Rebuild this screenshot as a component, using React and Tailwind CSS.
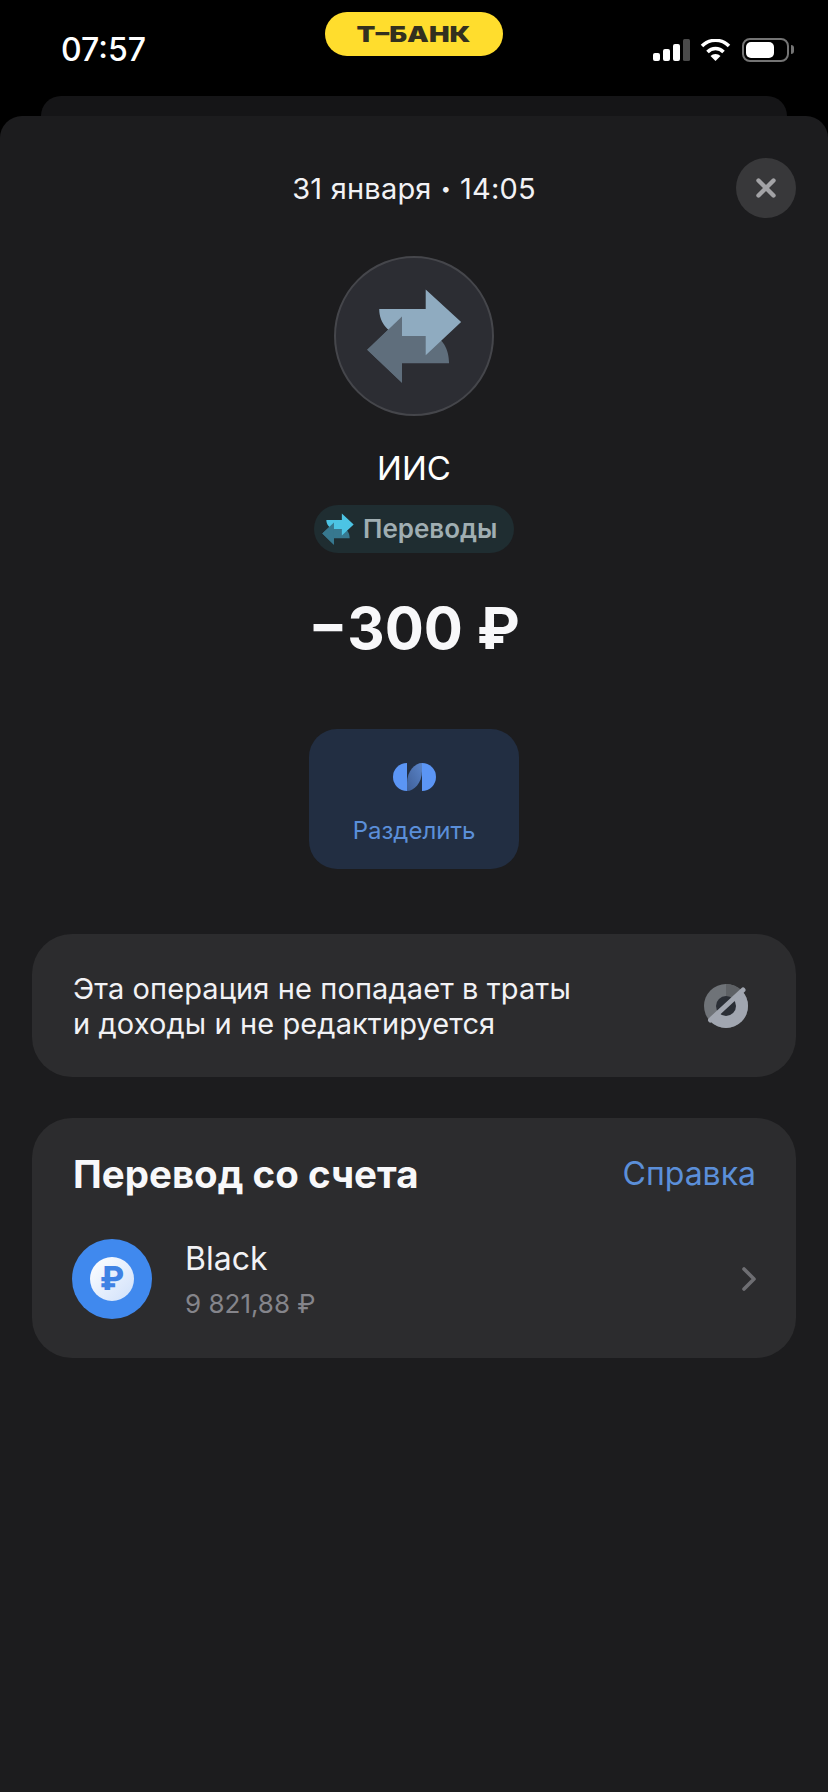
import { X } from "lucide-react";

const StatusIcons = () => (
  <div className="flex items-center justify-end h-[25px]">
    <svg width="37" height="22" viewBox="0 0 37 22" className="mr-[10px]">
      <rect x="0" y="14" width="7" height="8" rx="2" fill="#fff" />
      <rect x="10" y="10" width="7" height="12" rx="2" fill="#fff" />
      <rect x="20" y="5" width="7" height="17" rx="2" fill="#fff" />
      <rect x="30" y="0" width="7" height="22" rx="1.5" fill="#4a4a4a" />
    </svg>
    <svg width="31" height="22" viewBox="0 0 31 22" className="mr-[11px]">
      <path d="M15.5 22 L10.5 17 A7 7 0 0 1 20.5 17 Z" fill="#fff" />
      <path d="M7.5 13 A11 11 0 0 1 23.5 13" fill="none" stroke="#fff" strokeWidth="3.5" />
      <path d="M2 7 A19 19 0 0 1 29 7" fill="none" stroke="#fff" strokeWidth="3.5" />
    </svg>
    <div className="flex items-center">
      <div className="w-[47px] h-[24px] rounded-[8px] border-2 border-[#747474] p-[2px]">
        <div className="w-[28px] h-full rounded-[5px] bg-white"></div>
      </div>
      <div className="w-[3px] h-[9px] ml-[2px] rounded-r-full bg-[#747474]"></div>
    </div>
  </div>
);

const TransferIcon = ({ size, light, dark, box }) => (
  <svg width={size} height={size} viewBox={box}>
    <path d="M198 330 L305 228 V288 H395 C430 290 450 330 450 372 H305 V432 Z" fill={dark} />
    <path d="M235 205 H378 V145 L487 245 L378 347 V288 H305 C265 280 235 250 235 205 Z" fill={light} />
    <path d="M198 330 L305 228 V432 Z" fill={dark} />
  </svg>
);

const SplitIcon = () => (
  <svg width="47" height="28" viewBox="0 0 47 28">
    <defs>
      <linearGradient id="leaf" x1="0" y1="1" x2="1" y2="0">
        <stop offset="0" stopColor="#3f5f98" />
        <stop offset="1" stopColor="#5a84c8" />
      </linearGradient>
    </defs>
    <path d="M16 0 A14 14 0 0 0 16 28 Z" fill="#5b95f5" />
    <path d="M31 0 A14 14 0 0 1 31 28 Z" fill="#5b95f5" />
    <path d="M16 28 V20 C16 8 24 0 31 0 V8 C31 20 23 28 16 28 Z" fill="url(#leaf)" />
  </svg>
);

const NoEditIcon = () => (
  <svg width="46" height="46" viewBox="0 0 46 46">
    <defs>
      <clipPath id="disc">
        <circle cx="23" cy="23" r="22" />
      </clipPath>
    </defs>
    <circle cx="23" cy="23" r="22" fill="#6f7378" />
    <path d="M23 23 L23 1 A22 22 0 0 1 39 8 Z" fill="#5e6165" />
    <path d="M40.7 4.7 L5.7 36.3 V46 H46 V4.7 Z" fill="#a1a6b0" clipPath="url(#disc)" />
    <circle cx="23" cy="23" r="10" fill="#2a2e35" />
    <path d="M40 7 L7.5 37" stroke="#a1a6b0" strokeWidth="5" strokeLinecap="round" />
  </svg>
);

export default function App() {
  return (
    <div className="h-[1792px] w-[828px] bg-black flex flex-col overflow-hidden font-['Inter',sans-serif]">
      {/* Status bar */}
      <div className="h-[96px] grid grid-cols-[240px_1fr_240px] shrink-0">
        <div className="pl-[61px] pt-[30px] text-[32px] leading-[39px] font-medium text-white">07:57</div>
        <div className="flex justify-center pt-[12px]">
          <div className="w-[178px] h-[44px] rounded-[22px] bg-[#ffdd2d] flex items-center justify-center">
            <span className="text-[22px] font-black text-[#33301f] scale-x-[1.25]">Т–БАНК</span>
          </div>
        </div>
        <div className="pt-[37px] pr-[34px]">
          <StatusIcons />
        </div>
      </div>

      {/* Card behind the sheet */}
      <div className="mx-[41px] h-[20px] rounded-t-[20px] bg-[#151517] shrink-0"></div>

      {/* Sheet */}
      <div className="relative flex-1 rounded-t-[22px] bg-[#1c1c1e] flex flex-col items-center">
        <button className="absolute top-[42px] right-[32px] w-[60px] h-[60px] rounded-full bg-[#38383a] flex items-center justify-center">
          <X size={30} strokeWidth={3.5} className="text-[#a3a3a6]" />
        </button>

        <div className="mt-[55px] h-[36px] flex items-center text-[29px] leading-[36px] tracking-[0.2px] text-[#f2f2f5]">
          31 января<span className="mx-[9px] text-[18px]">•</span>14:05
        </div>

        <div className="mt-[49px] w-[160px] h-[160px] rounded-full bg-[#2c2d33] border-2 border-[#45464b] flex items-center justify-center">
          <TransferIcon size={156} light="#8fabc0" dark="#5f6e7c" box="102 48 480 480" />
        </div>

        <div className="mt-[31px] text-[33px] leading-[42px] text-white">ИИС</div>

        <div className="mt-[16px] w-[200px] h-[48px] rounded-full bg-[#1f2d31] flex items-center pl-[8px] gap-[9px]">
          <TransferIcon size={32} light="#4cc4e4" dark="#37788f" box="195 140 295 295" />
          <span className="text-[26px] leading-[30px] font-semibold text-[#a0aeb2]">Переводы</span>
        </div>

        <div className="mt-[39px] text-[58px] leading-[72px] font-bold text-[#f8f8fa]">−300 ₽</div>

        <div className="mt-[65px] w-[210px] h-[140px] rounded-[28px] bg-[#222e42] flex flex-col items-center pt-[34px]">
          <SplitIcon />
          <div className="mt-[25px] text-[24px] leading-[30px] text-[#5b8fd9]">Разделить</div>
        </div>

        <div className="mt-[65px] w-[764px] h-[143px] rounded-[40px] bg-[#2c2c2e] flex items-center justify-between pl-[41px] pr-[47px]">
          <div className="text-[29px] leading-[35px] tracking-[0.1px] text-[#f2f2f5]">
            Эта операция не попадает в траты
            <br />
            и доходы и не редактируется
          </div>
          <NoEditIcon />
        </div>

        <div className="mt-[41px] w-[764px] h-[240px] rounded-[40px] bg-[#2c2c2e] flex flex-col">
          <div className="mt-[33px] flex items-center justify-between pl-[41px] pr-[40px]">
            <span className="text-[38.5px] leading-[46px] font-bold text-[#f8f8fa]">Перевод со счета</span>
            <span className="text-[32px] leading-[46px] text-[#5b8fd9]">Справка</span>
          </div>
          <div className="mt-[41px] flex items-center pl-[40px] pr-[40px]">
            <div className="w-[80px] h-[80px] rounded-full bg-[#4089ee] flex items-center justify-center shrink-0">
              <div className="w-[44px] h-[44px] rounded-full bg-gradient-to-br from-white to-[#cfe0fa] flex items-center justify-center text-[32px] font-extrabold text-[#3f82e4]">
                ₽
              </div>
            </div>
            <div className="ml-[33px] flex-1">
              <div className="text-[32px] leading-[42px] text-[#f2f2f5]">Black</div>
              <div className="mt-[8px] text-[26px] leading-[32px] text-[#85858b]">9 821,88 ₽</div>
            </div>
            <svg width="14" height="24" viewBox="0 0 14 24">
              <path d="M2 2 L12 12 L2 22" fill="none" stroke="#6e6e72" strokeWidth="3.6" strokeLinecap="round" strokeLinejoin="round" />
            </svg>
          </div>
        </div>
      </div>
    </div>
  );
}
